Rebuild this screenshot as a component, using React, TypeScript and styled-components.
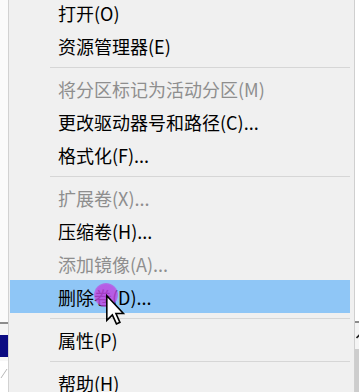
import React from "react";
import styled, { createGlobalStyle } from "styled-components";

const Global = createGlobalStyle`
  html, body { margin: 0; padding: 0; background: #ffffff; overflow: hidden; }
  #root { width: 359px; height: 392px; }
`;

const Screen = styled.div`
  position: relative;
  width: 359px;
  height: 392px;
  overflow: hidden;
  display: flex;
  background: #ffffff;
  font-family: "Noto Sans CJK SC", "Noto Sans", sans-serif;
`;

const SideStrip = styled.div<{ $w: number }>`
  width: ${(p) => p.$w}px;
  flex: none;
  display: flex;
  flex-direction: column;
  background: #ffffff;
`;

const StripSpace = styled.div<{ $h: number; $bg?: string }>`
  height: ${(p) => p.$h}px;
  flex: none;
  background: ${(p) => p.$bg || "transparent"};
`;

const StripRule = styled.div`
  height: 2px;
  flex: none;
  background: #8c8c8c;
`;

const StripFill = styled.div<{ $bg: string }>`
  flex: 1;
  background: ${(p) => p.$bg};
`;

const ArrowCell = styled.div`
  height: 26px;
  flex: none;
  display: flex;
  align-items: center;
  justify-content: center;
  background: #f4f4f4;
`;

const Menu = styled.div`
  width: 340px;
  flex: none;
  margin-top: -4px;
  align-self: flex-start;
  background: #f0f0f0;
  border-left: 1px solid #d2d2d2;
  border-right: 1px solid #cfcfcf;
  box-shadow: 1px 0 0 #dcdcdc, 2px 0 0 #eeeeee;
  padding: 0 4px 8px 1px;
  display: flex;
  flex-direction: column;
`;

const Item = styled.div<{ $disabled?: boolean; $active?: boolean }>`
  height: 33px;
  display: flex;
  align-items: center;
  padding-left: 48px;
  font-size: 18px;
  font-weight: 400;
  color: ${(p) => (p.$disabled ? "#8e8e8e" : "#000000")};
  background: ${(p) => (p.$active ? "#8fc6f6" : "transparent")};
  white-space: nowrap;
`;

const Separator = styled.div`
  height: 10px;
  margin-left: 40px;
  display: flex;
  flex-direction: column;
  justify-content: center;
  &::before {
    content: "";
    height: 1px;
    background: #d6d6d6;
    margin-top: 1px;
  }
`;

const Spot = styled.div`
  position: absolute;
  left: 94px;
  top: 283px;
  width: 24px;
  height: 24px;
  border-radius: 50%;
  background: radial-gradient(circle, rgba(190, 72, 226, 0.88) 0%, rgba(190, 72, 226, 0.82) 60%, rgba(190, 72, 226, 0) 100%);
  pointer-events: none;
`;

const Cursor = styled.svg`
  position: absolute;
  left: 106px;
  top: 295px;
  width: 19px;
  height: 30px;
  overflow: visible;
`;

type Entry = { label: string; disabled?: boolean; active?: boolean } | "sep";

const entries: Entry[] = [
  { label: "打开(O)" },
  { label: "资源管理器(E)" },
  "sep",
  { label: "将分区标记为活动分区(M)", disabled: true },
  { label: "更改驱动器号和路径(C)..." },
  { label: "格式化(F)..." },
  "sep",
  { label: "扩展卷(X)...", disabled: true },
  { label: "压缩卷(H)..." },
  { label: "添加镜像(A)...", disabled: true },
  { label: "删除卷(D)...", active: true },
  "sep",
  { label: "属性(P)" },
  "sep",
  { label: "帮助(H)" },
];

export default function App() {
  return (
    <>
      <Global />
      <Screen>
        <SideStrip $w={8}>
          <StripSpace $h={322} $bg="#fbfbfb" />
          <StripRule />
          <StripSpace $h={11} $bg="#f4f4f4" />
          <StripSpace $h={22} $bg="#0b0b82" />
          <StripSpace $h={4} $bg="#f7f7f7" />
          <svg width="8" height="20" viewBox="0 0 8 20">
            <line x1="1" y1="17" x2="7" y2="8" stroke="#b8b8b8" strokeWidth="1" />
          </svg>
          <StripFill $bg="#ffffff" />
        </SideStrip>
        <Menu>
          {entries.map((e, i) =>
            e === "sep" ? (
              <Separator key={i} />
            ) : (
              <Item key={i} $disabled={e.disabled} $active={e.active}>
                {e.label}
              </Item>
            )
          )}
        </Menu>
        <SideStrip $w={9}>
          <StripSpace $h={321} $bg="#ffffff" />
          <StripRule />
          <ArrowCell>
            <svg width="8" height="6" viewBox="0 0 8 6">
              <path d="M0.5 5 L4 1.5 L7.5 5" fill="none" stroke="#202020" strokeWidth="1.6" />
            </svg>
          </ArrowCell>
          <StripFill $bg="#cdcdcd" />
        </SideStrip>
        <Spot />
        <Cursor viewBox="0 0 12 19">
          <path
            d="M0.5 0.5 L0.5 16 L4 12.6 L6.6 18.3 L8.8 17.3 L6.3 11.7 L11 11.7 Z"
            fill="#ffffff"
            stroke="#000000"
            strokeWidth="1"
            strokeLinejoin="miter"
          />
        </Cursor>
      </Screen>
    </>
  );
}
